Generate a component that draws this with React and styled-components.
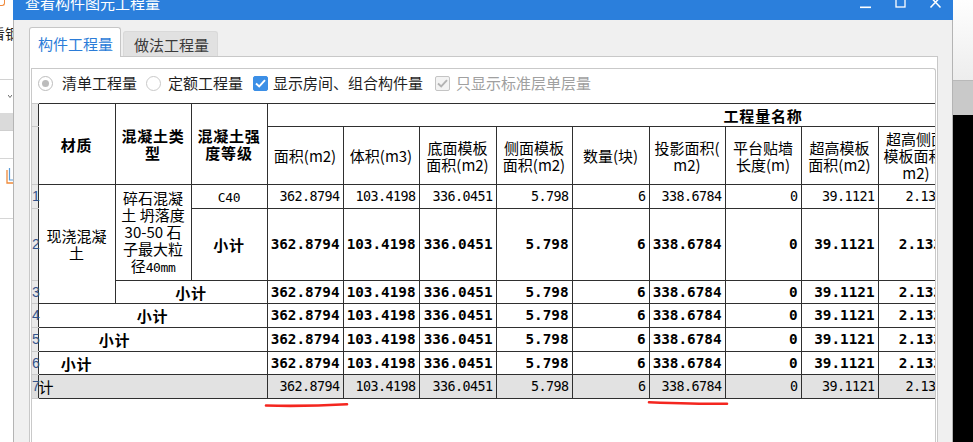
import React from "react";
import styled, { createGlobalStyle } from "styled-components";

const CJK = `"Noto Sans CJK SC", "Noto Sans", sans-serif`;
const MONO = `"DejaVu Sans Mono", "Liberation Mono", monospace`;

const GlobalStyle = createGlobalStyle`
  html, body { margin: 0; padding: 0; background: #fff; overflow: hidden; }
  body { font-family: ${CJK}; }
`;

const Screen = styled.div`
  position: relative;
  width: 973px;
  height: 442px;
  overflow: hidden;
  display: flex;
  font-family: ${CJK};
`;

/* ---------- backdrop app (left / right of the dialog) ---------- */
const BackLeft = styled.div`
  flex: none;
  width: 13px;
  height: 442px;
  background: #fff;
  overflow: hidden;
  display: flex;
  flex-direction: column;
`;

const BackRight = styled.div`
  flex: none;
  width: 20px;
  height: 442px;
  display: flex;
  flex-direction: column;
  overflow: hidden;
`;

const Seg = styled.div`
  flex: ${(p) => (p.$h ? "none" : "1")};
  height: ${(p) => (p.$h ? `${p.$h}px` : "auto")};
  background: ${(p) => p.$bg || "transparent"};
  border-bottom: ${(p) => (p.$line ? `1px solid ${p.$line}` : "none")};
  box-sizing: border-box;
  overflow: hidden;
  display: flex;
  align-items: ${(p) => p.$align || "flex-start"};
  justify-content: ${(p) => p.$justify || "flex-start"};
`;

const OrangeCorner = styled.div`
  width: 4px;
  height: 5px;
  border-right: 1.5px solid #f08a3c;
  border-bottom: 1.5px solid #f08a3c;
  border-bottom-right-radius: 3px;
`;

const BackText = styled.div`
  margin: 13px 0 0 -9px;
  font-size: 14px;
  line-height: 15px;
  color: #1e1e1e;
  white-space: nowrap;
`;

/* ---------- dialog ---------- */
const Dialog = styled.div`
  flex: none;
  width: 940px;
  height: 442px;
  display: flex;
  flex-direction: column;
`;

const TitleBar = styled.div`
  flex: none;
  height: 32px;
  margin-top: -12px;
  padding: 0 12px 2px 12px;
  box-sizing: border-box;
  background: #2b7fdc;
  display: flex;
  align-items: center;
  justify-content: space-between;
  color: #fff;
`;

const TitleText = styled.div`
  font-size: 15px;
  line-height: 16px;
  white-space: nowrap;
`;

const WinControls = styled.div`
  display: flex;
  align-items: center;
  gap: 24px;
  svg { display: block; overflow: visible; }
`;

const DialogBody = styled.div`
  flex: 1;
  min-height: 0;
  background: #f0f0f0;
  border-left: 1px solid #b4b4b4;
  border-right: 1px solid #b4b4b4;
  padding: 7px 14px 0 15px;
  display: flex;
  flex-direction: column;
`;

const TabStrip = styled.div`
  flex: none;
  display: flex;
  align-items: flex-end;
  gap: 2px;
  margin-bottom: -1px;
  position: relative;
  z-index: 1;
`;

const Tab = styled.div`
  box-sizing: border-box;
  height: ${(p) => (p.$active ? 30 : 25)}px;
  margin-bottom: ${(p) => (p.$active ? 0 : 1)}px;
  padding: ${(p) => (p.$active ? "2px 7px 0 8px" : "1px 8px 0 10px")};
  background: ${(p) => (p.$active ? "#fff" : "#e1e1e1")};
  border: 1px solid ${(p) => (p.$active ? "#c6c6c6" : "#d9d9d9")};
  border-bottom: none;
  border-radius: 3px 3px 0 0;
  color: ${(p) => (p.$active ? "#2b7cd8" : "#3a3a3a")};
  font-size: 15px;
  line-height: 16px;
  display: flex;
  align-items: center;
  white-space: nowrap;
`;

const TabPanel = styled.div`
  flex: 1;
  min-height: 0;
  background: #fff;
  border: 1px solid #c8c8c8;
  border-bottom: none;
  padding: 11px 1px 0 1px;
  display: flex;
  flex-direction: column;
`;

const InnerPanel = styled.div`
  flex: 1;
  min-height: 0;
  background: #fff;
  border: 1px solid #c9c9c9;
  border-bottom: none;
  border-top-right-radius: 3px;
  display: flex;
  flex-direction: column;
  overflow: hidden;
`;

/* ---------- options row ---------- */
const OptionsBar = styled.div`
  flex: none;
  height: 34px;
  box-sizing: border-box;
  padding-bottom: 6px;
  display: flex;
  align-items: center;
`;

const Option = styled.label`
  display: flex;
  align-items: center;
  gap: ${(p) => p.$gap}px;
  margin-left: ${(p) => p.$lead}px;
  font-size: 15px;
  line-height: 16px;
  color: ${(p) => (p.$disabled ? "#a0a0a0" : "#1f1f1f")};
  white-space: nowrap;
`;

const Radio = styled.span`
  flex: none;
  width: 15px;
  height: 15px;
  box-sizing: border-box;
  border-radius: 50%;
  border: 1px solid ${(p) => (p.$checked ? "#bdbdbd" : "#c9c9c9")};
  background: #fff;
  display: flex;
  align-items: center;
  justify-content: center;
  &::after {
    content: "";
    width: 7px;
    height: 7px;
    border-radius: 50%;
    background: ${(p) => (p.$checked ? "#bcbcbc" : "transparent")};
  }
`;

const CheckBox = styled.span`
  flex: none;
  width: 15px;
  height: 15px;
  box-sizing: border-box;
  border-radius: 2px;
  border: 1px solid ${(p) => (p.$disabled ? "#c4c4c4" : "#3c8fe6")};
  background: ${(p) => (p.$disabled ? "#f3f3f3" : "#3c8fe6")};
  display: flex;
  align-items: center;
  justify-content: center;
  svg { display: block; }
`;

/* ---------- table ---------- */
const TableClip = styled.div`
  flex: none;
  overflow: hidden;
`;

const QtyTable = styled.table`
  border-collapse: collapse;
  table-layout: fixed;
  width: ${(p) => p.$w}px;
`;

const Col = styled.col`
  width: ${(p) => p.$w}px;
`;

const Row = styled.tr`
  height: ${(p) => p.$h}px;
  background: ${(p) => (p.$total ? "#e2e2e2" : "#fff")};
`;

const StripCell = styled.td`
  padding: 0;
  border: none;
  border-top: 1px solid #c9c9c9;
  border-bottom: 1px solid #c9c9c9;
  background: ${(p) => (p.$total ? "#dedede" : "#e9e9e9")};
  font-family: "Liberation Sans", Arial, sans-serif;
  font-size: 14px;
  line-height: 15px;
  color: #34548c;
  text-align: left;
  overflow: visible;
  white-space: nowrap;
`;

const Cell = styled.td`
  border: 1px solid #2f2f2f;
  padding: 0 ${(p) => (p.$pr != null ? p.$pr : 1)}px 0 ${(p) => (p.$pl != null ? p.$pl : 1)}px;
  font-family: ${CJK};
  font-size: 15px;
  line-height: 17px;
  font-weight: ${(p) => (p.$bold ? 700 : 400)};
  letter-spacing: ${(p) => (p.$bold ? "0.8px" : "0")};
  text-align: ${(p) => p.$align || "center"};
  color: #000;
  white-space: nowrap;
  overflow: hidden;
`;

const NumCell = styled.td`
  border: 1px solid #2f2f2f;
  padding: 0 3px 0 0;
  font-family: ${MONO};
  font-size: ${(p) => (p.$bold ? "14.3px" : "13.4px")};
  letter-spacing: ${(p) => (p.$bold ? "0" : "-0.56px")};
  font-weight: ${(p) => (p.$bold ? 700 : 400)};
  line-height: 17px;
  text-align: right;
  color: #000;
  white-space: nowrap;
  overflow: hidden;
`;

const MonoText = styled.span`
  font-family: ${MONO};
  font-size: 13px;
  letter-spacing: -0.4px;
`;

const Annotations = styled.svg`
  position: absolute;
  left: 0;
  top: 0;
  pointer-events: none;
`;

/* ---------- data ---------- */
const colWidths = [77, 76, 76, 76, 76, 77, 76, 77, 76, 76, 77, 76, 76, 77, 76, 76];
const STRIP = 6;
const tableWidth = STRIP + colWidths.reduce((a, b) => a + b, 0);

const qtyHeads = [
  ["面积(m2)"],
  ["体积(m3)"],
  ["底面模板", "面积(m2)"],
  ["侧面模板", "面积(m2)"],
  ["数量(块)"],
  ["投影面积(", "m2)"],
  ["平台贴墙", "长度(m)"],
  ["超高模板", "面积(m2)"],
  ["超高侧面", "模板面积(", "m2)"],
  ["超高底面", "模板面积(", "m2)"],
  ["超高模板", "体积(m3)"],
  ["模板体积", "(m3)"],
  ["脚手架面", "积(m2)"],
];

const values = [
  "362.8794",
  "103.4198",
  "336.0451",
  "5.798",
  "6",
  "338.6784",
  "0",
  "39.1121",
  "2.1336",
  "0.9862",
  "0",
  "0",
  "0",
];

const Lines = ({ lines }) =>
  lines.map((l, i) => (
    <React.Fragment key={i}>
      {i > 0 && <br />}
      {l}
    </React.Fragment>
  ));

const Values = ({ bold }) =>
  values.map((v, i) => (
    <NumCell key={i} $bold={bold}>
      {v}
    </NumCell>
  ));

function CheckMark({ color }) {
  return (
    <svg width="11" height="9" viewBox="0 0 11 9">
      <path d="M1 4.5 L4.2 7.5 L10 1.2" fill="none" stroke={color} strokeWidth="1.9" />
    </svg>
  );
}

export default function App() {
  return (
    <>
      <GlobalStyle />
      <Screen>
        <BackLeft>
          <Seg $h={13}>
            <OrangeCorner />
          </Seg>
          <Seg $h={67} $line="#d2d2d2">
            <BackText>看钢</BackText>
          </Seg>
          <Seg $h={33} $align="center" $justify="flex-end">
            <svg width="4" height="3" viewBox="0 0 4 3" style={{ marginRight: 1 }}>
              <path d="M0 0 L2 2.5 L4 0" fill="none" stroke="#444" strokeWidth="0.8" />
            </svg>
          </Seg>
          <Seg $h={18} $bg="#dadada" $line="#cfcfcf" />
          <Seg $h={28} $line="#d6d6d6" />
          <Seg $h={60} $line="#d6d6d6" $justify="flex-end">
            <svg width="7" height="18" viewBox="0 0 7 18" style={{ marginTop: 9 }}>
              <path d="M1 2 V15 H7" fill="none" stroke="#ef8a3a" strokeWidth="1.3" />
              <path d="M3.5 0 V12 H7" fill="none" stroke="#5b9bd8" strokeWidth="1.2" />
            </svg>
          </Seg>
          <Seg />
        </BackLeft>

        <Dialog>
          <TitleBar>
            <TitleText>查看构件图元工程量</TitleText>
            <WinControls>
              <svg width="11" height="11" viewBox="0 0 11 11">
                <rect x="0" y="8.5" width="11" height="1.6" fill="#fff" />
              </svg>
              <svg width="11" height="11" viewBox="0 0 11 11">
                <rect x="1" y="0" width="9" height="9" fill="none" stroke="#fff" strokeWidth="1.3" />
                <rect x="1" y="0" width="9" height="2" fill="#fff" />
              </svg>
              <svg width="11" height="11" viewBox="0 0 11 11">
                <path d="M0.5 -1 L10.5 9.5 M10.5 -1 L0.5 9.5" stroke="#fff" strokeWidth="1.5" />
              </svg>
            </WinControls>
          </TitleBar>

          <DialogBody>
            <TabStrip>
              <Tab $active>构件工程量</Tab>
              <Tab>做法工程量</Tab>
            </TabStrip>
            <TabPanel>
              <InnerPanel>
                <OptionsBar>
                  <Option $lead={6} $gap={9}>
                    <Radio $checked />
                    清单工程量
                  </Option>
                  <Option $lead={9} $gap={7}>
                    <Radio />
                    定额工程量
                  </Option>
                  <Option $lead={10} $gap={5}>
                    <CheckBox>
                      <CheckMark color="#fff" />
                    </CheckBox>
                    显示房间、组合构件量
                  </Option>
                  <Option $lead={12} $gap={6} $disabled>
                    <CheckBox $disabled>
                      <CheckMark color="#b3b3b3" />
                    </CheckBox>
                    只显示标准层单层量
                  </Option>
                </OptionsBar>

                <TableClip>
                  <QtyTable $w={tableWidth}>
                    <colgroup>
                      <Col $w={STRIP} />
                      {colWidths.map((w, i) => (
                        <Col key={i} $w={w} />
                      ))}
                    </colgroup>
                    <tbody>
                      <Row $h={23}>
                        <StripCell />
                        <Cell rowSpan={2} $bold>
                          材质
                        </Cell>
                        <Cell rowSpan={2} $bold>
                          混凝土类
                          <br />型
                        </Cell>
                        <Cell rowSpan={2} $bold>
                          混凝土强
                          <br />
                          度等级
                        </Cell>
                        <Cell colSpan={13} $bold>
                          工程量名称
                        </Cell>
                      </Row>
                      <Row $h={58}>
                        <StripCell />
                        {qtyHeads.map((h, i) => (
                          <Cell key={i}>
                            <Lines lines={h} />
                          </Cell>
                        ))}
                      </Row>

                      <Row $h={24}>
                        <StripCell>1</StripCell>
                        <Cell rowSpan={3}>
                          现浇混凝
                          <br />土
                        </Cell>
                        <Cell rowSpan={2}>
                          碎石混凝
                          <br />土 坍落度
                          <br />
                          30-50 石
                          <br />
                          子最大粒
                          <br />径<MonoText>40mm</MonoText>
                        </Cell>
                        <Cell>
                          <MonoText>C40</MonoText>
                        </Cell>
                        <Values />
                      </Row>
                      <Row $h={72}>
                        <StripCell>2</StripCell>
                        <Cell $bold>小计</Cell>
                        <Values bold />
                      </Row>
                      <Row $h={23}>
                        <StripCell>3</StripCell>
                        <Cell colSpan={2} $bold>
                          小计
                        </Cell>
                        <Values bold />
                      </Row>
                      <Row $h={24}>
                        <StripCell>4</StripCell>
                        <Cell colSpan={3} $bold>
                          小计
                        </Cell>
                        <Values bold />
                      </Row>
                      <Row $h={24}>
                        <StripCell>5</StripCell>
                        <Cell colSpan={3} $bold $pr={77}>
                          小计
                        </Cell>
                        <Values bold />
                      </Row>
                      <Row $h={23}>
                        <StripCell>6</StripCell>
                        <Cell colSpan={3} $bold $pr={153}>
                          小计
                        </Cell>
                        <Values bold />
                      </Row>
                      <Row $h={24} $total>
                        <StripCell $total>7</StripCell>
                        <Cell colSpan={3} $align="left" $pl={0}>
                          计
                        </Cell>
                        <Values />
                      </Row>
                    </tbody>
                  </QtyTable>
                </TableClip>
              </InnerPanel>
            </TabPanel>
          </DialogBody>
        </Dialog>

        <BackRight>
          <Seg $h={81} $bg="linear-gradient(#fefefe, #ededed)" $line="#b9b9b9" />
          <Seg $h={34} $bg="#c9c9c9" />
          <Seg $bg="#000" />
        </BackRight>

        <Annotations width="973" height="442" viewBox="0 0 973 442">
          <path
            d="M266 405.5 C 290 406.2, 322 405.6, 347 404.2"
            fill="none"
            stroke="#f4261f"
            strokeWidth="2.6"
            strokeLinecap="round"
          />
          <path
            d="M649 402.2 C 672 403, 702 404, 727 403.8"
            fill="none"
            stroke="#f4261f"
            strokeWidth="2.6"
            strokeLinecap="round"
          />
        </Annotations>
      </Screen>
    </>
  );
}
